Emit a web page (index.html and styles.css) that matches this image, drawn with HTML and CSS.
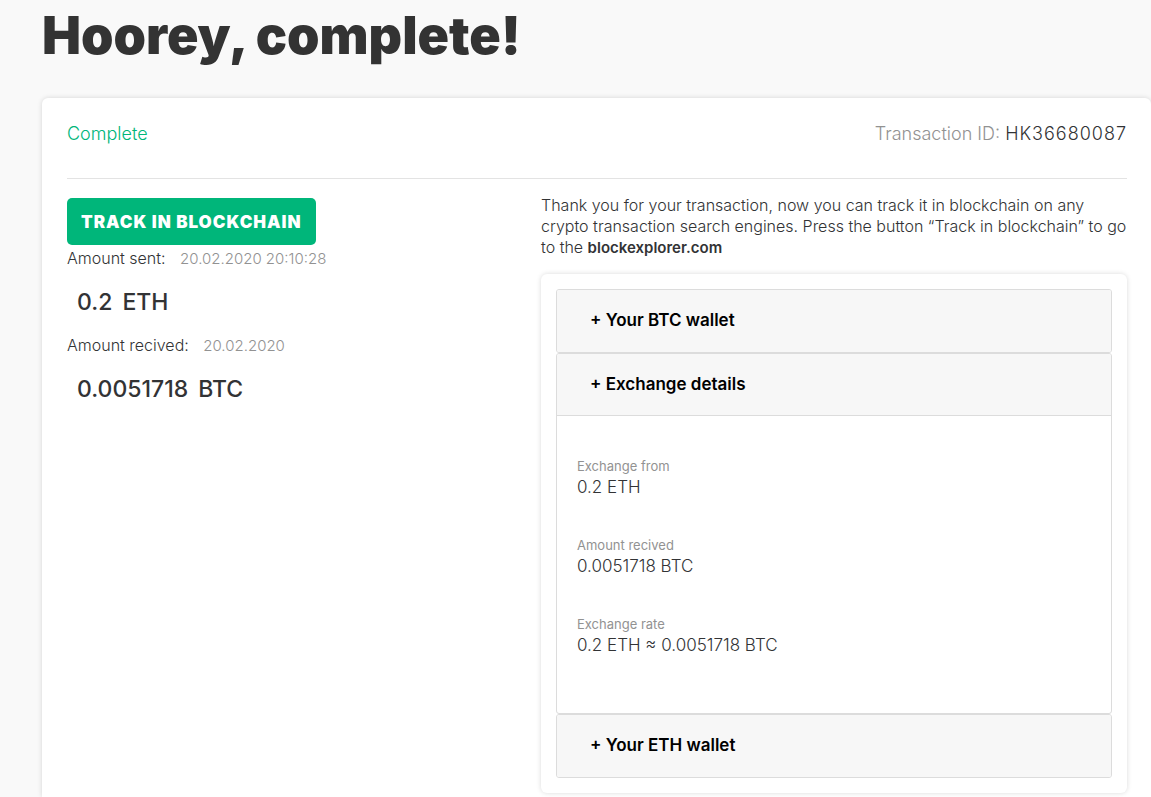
FILE: index.html
```html
<!DOCTYPE html>
<html lang="en">
<head>
<meta charset="utf-8">
<meta name="viewport" content="width=device-width, initial-scale=1">
<title>Transaction complete</title>
<link rel="stylesheet" href="styles.css">
</head>
<body>
<main class="page">
  <h1 class="title">Hoorey, complete!</h1>
  <section class="card">
    <header class="card-head">
      <span class="status">Complete</span>
      <span class="txn">Transaction ID: <span class="txn-id">HK36680087</span></span>
    </header>
    <div class="columns">
      <div class="summary">
        <button class="track" type="button">TRACK IN BLOCKCHAIN</button>
        <p class="line">Amount sent: <span class="date">20.02.2020 20:10:28</span></p>
        <p class="amount"><span>0.2</span><span>ETH</span></p>
        <p class="line">Amount recived: <span class="date">20.02.2020</span></p>
        <p class="amount"><span>0.0051718</span><span>BTC</span></p>
      </div>
      <div class="info">
        <p class="thanks">Thank you for your transaction, now you can track it in blockchain on any crypto transaction search engines. Press the button “Track in blockchain” to go to the <a class="explorer" href="#">blockexplorer.com</a></p>
        <div class="accordion">
          <div class="item"><button class="toggle" type="button">+ Your BTC wallet</button></div>
          <div class="item">
            <button class="toggle open" type="button" aria-expanded="true">+ Exchange details</button>
            <dl class="details">
              <div class="pair"><dt>Exchange from</dt><dd>0.2 ETH</dd></div>
              <div class="pair"><dt>Amount recived</dt><dd>0.0051718 BTC</dd></div>
              <div class="pair"><dt>Exchange rate</dt><dd>0.2 ETH ≈ 0.0051718 BTC</dd></div>
            </dl>
          </div>
          <div class="item"><button class="toggle" type="button">+ Your ETH wallet</button></div>
        </div>
      </div>
    </div>
  </section>
</main>
</body>
</html>
```
FILE: styles.css
```css
* { box-sizing: border-box; }
html { background: #f9f9f9; }
body { margin: 0; font-family: Inter, sans-serif; font-size: 16px; font-weight: 300; line-height: 21px; color: #323335; }
h1, p, dl, dd { margin: 0; }
button { font-family: inherit; cursor: pointer; }
.page { padding-left: 42px; min-height: 100vh; display: flex; flex-direction: column; overflow: hidden; }
.title { padding-top: 6px; margin-bottom: 32px; font-size: 52px; line-height: 60px; font-weight: 900; color: #333; }
.card { flex: 1; padding: 0 24px 4px 25px; background: #fff; border-radius: 6px 6px 0 0; box-shadow: 0 0 5px rgba(0, 0, 0, .15); }
.card-head { display: flex; justify-content: space-between; height: 81px; padding-top: 25px; border-bottom: 1px solid #e3e3e3; font-size: 18px; }
.status { color: #00b67a; }
.txn { color: #929292; }
.txn-id { color: #323335; letter-spacing: 1px; }
.columns { display: grid; grid-template-columns: 474px 1fr; padding-top: 16px; }
.summary { padding-top: 3px; }
.track { display: block; height: 47px; padding: 0 14px; margin-bottom: 3px; border: 0; border-radius: 5px; background: #00b67a; color: #fff; font-weight: 900; font-size: 17px; letter-spacing: 1px; }
.date { margin-left: 10px; color: #929292; font-size: 15px; }
.amount { display: flex; gap: 10px; padding: 17px 10px 17px; font-size: 23px; line-height: 32px; font-weight: 500; }
.explorer { color: inherit; font-weight: 600; font-size: 15px; text-decoration: none; }
.accordion { margin-top: 16px; padding: 15px; border-radius: 6px; box-shadow: 0 0 5px rgba(0, 0, 0, .15); }
.item { border: 1px solid #dcdcdc; border-radius: 3px; }
.toggle { display: block; width: 100%; height: 62px; padding: 0 33px 2px; border: 0; border-radius: 2px; background: #f7f7f7; color: #000; font-size: 17px; font-weight: 600; text-align: left; }
.open { border-bottom: 1px solid #dcdcdc; border-radius: 2px 2px 0 0; }
.details { display: grid; gap: 37px; padding: 40px 20px 57px; }
dt { color: #929292; font-size: 13px; font-weight: 400; }
dd { font-size: 17px; }
```
